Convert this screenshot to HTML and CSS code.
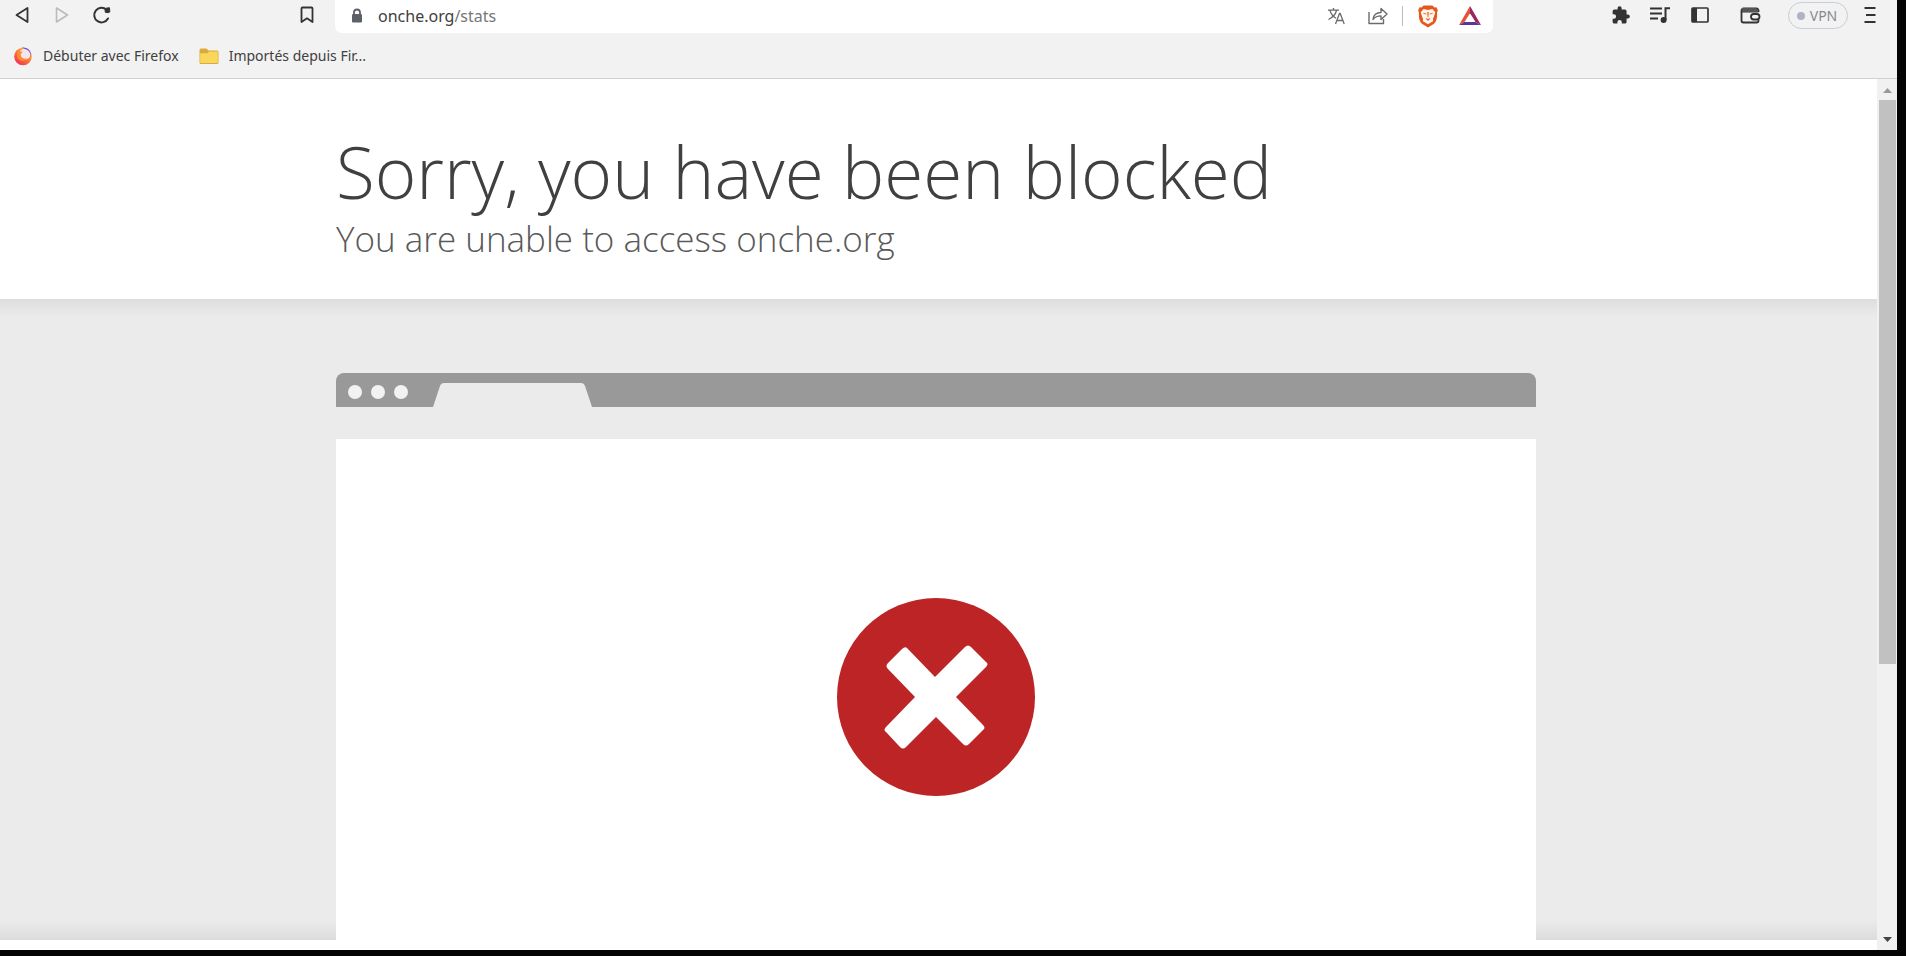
FILE: index.html
```html
<!DOCTYPE html>
<html lang="fr">
<head>
<meta charset="utf-8">
<meta name="viewport" content="width=device-width, initial-scale=1">
<title>onche.org/stats</title>
<link rel="stylesheet" href="styles.css">
</head>
<body>
<div class="browser">
  <header class="chrome">
    <div class="toolbar">
      <nav class="nav-buttons" aria-label="Navigation">
        <button class="icon-btn" aria-label="Back"><svg width="24" height="24" viewBox="0 0 24 24"><path d="M17.500 5v14L6.500 12z" fill="none" stroke="#333" stroke-width="1.800" stroke-linejoin="round"/></svg></button>
        <button class="icon-btn" aria-label="Forward" disabled><svg width="24" height="24" viewBox="0 0 24 24"><path d="M6.500 5v14L17.500 12z" fill="none" stroke="#bbb" stroke-width="1.600" stroke-linejoin="round"/></svg></button>
        <button class="icon-btn" aria-label="Reload"><svg width="24" height="24" viewBox="0 0 24 24"><path d="M18 15.500A7.300 7.300 0 1 1 16.500 6.700" fill="none" stroke="#333" stroke-width="2" stroke-linecap="round"/><path d="M15 6.500l1.800-1.500 2.700-.2.300 4.200-1.600.7-2.900-.4z" fill="#333" stroke="#333" stroke-linejoin="round"/></svg></button>
        <button class="icon-btn push" aria-label="Bookmark"><svg width="24" height="24" viewBox="0 0 24 24"><path d="M6.500 5.500a1 1 0 0 1 1-1h9a1 1 0 0 1 1 1V19L12 15.300 6.500 19z" fill="none" stroke="#333" stroke-width="1.800" stroke-linejoin="round"/></svg></button>
      </nav>
      <div class="address">
        <svg width="14" height="16" viewBox="0 0 14 16"><path d="M4 7V4.500a3 3 0 0 1 6 0V7" fill="none" stroke="#5d6066" stroke-width="1.800"/><rect x="2" y="6" width="10" height="8.500" rx="1.300" fill="#5d6066"/></svg>
        <div class="url">onche.org<span class="path">/stats</span></div>
        <div class="address-tools">
          <button class="icon-btn" aria-label="Translate"><svg width="24" height="24" viewBox="0 0 24 24"><g fill="none" stroke="#6b6b6b" stroke-width="1.300"><path d="M4 6.200h11M9.500 4v2M12.500 6.500c-1 4-4 7-8 9M6 6.500c1 3.500 3 6 6 7.800M11.500 20l4-10.500h.700L20.200 20M13 16.500h6"/></g></svg></button>
          <button class="icon-btn" aria-label="Share"><svg width="24" height="24" viewBox="0 0 24 24"><path d="M3 8v11.500h14.500V15M7 15.500c.5-4.500 3-7 8-7V4.500l6 5.500-6 5.500v-3.600c-3.600 0-5.800.8-8 3.600z" fill="none" stroke="#6b6b6b" stroke-width="1.400" stroke-linejoin="round"/></svg></button>
          <span class="divider"></span>
          <button class="icon-btn" aria-label="Brave Shields"><svg width="24" height="24" viewBox="0 0 24 24"><path d="M7.500 1.500h9l2 2 2-.2 1.300 3-.7 2.200c.3 7-1.200 10-3.800 11.800L12 23.400l-5.300-3.100C4.100 18.500 2.600 15.500 2.900 8.500l-.7-2.200 1.300-3 2 .2z" fill="#e2581d"/><path d="M7.600 4.900 12 5.900l4.400-1 2.900 3.400-1 3.200-1.300 3.400.1 2.300-2.600 1.600L12 20.200l-2.500-1.400-2.600-1.600.1-2.300-1.300-3.400-1-3.200z" fill="#fff3ea"/><path d="m6.800 9 3.400.4.300 1.100-2.500-.4zM17.200 9l-3.400.4-.3 1.100 2.500-.4zM11.300 8h1.400l-.3 5.300h-.8zM9.600 14l2.400.9 2.400-.9-1.200 2L12 16.700l-1.200-.7z" fill="#d9622e"/></svg></button>
          <button class="icon-btn" aria-label="Rewards"><svg width="24" height="24" viewBox="0 0 24 24"><path d="M12 2v7.300L6.500 18 1 21z" fill="#e5533a"/><path d="M12 2l11 19-5.500-3L12 9.300z" fill="#9c2463"/><path d="M1 21l5.500-3h11l5.500 3z" fill="#5a3797"/></svg></button>
        </div>
      </div>
      <div class="actions">
        <button class="icon-btn" aria-label="Extensions"><svg width="24" height="24" viewBox="0 0 24 24"><path d="M20.500 11H19V7a2 2 0 0 0-2-2h-4V3.500a2.500 2.500 0 0 0-5 0V5H4a2 2 0 0 0-2 2v3.800h1.500a2.700 2.700 0 0 1 0 5.400H2V20a2 2 0 0 0 2 2h3.800v-1.500a2.700 2.700 0 0 1 5.400 0V22H17a2 2 0 0 0 2-2v-4h1.500a2.500 2.500 0 0 0 0-5z" transform="translate(3 2.500) scale(.82)" fill="#333"/></svg></button>
        <button class="icon-btn" aria-label="Media"><svg width="24" height="24" viewBox="0 0 24 24"><path d="M2 5.500h12M2 10.500h12M2 15.500h8M17.500 17V5.300H22" fill="none" stroke="#333" stroke-width="2"/><circle cx="15.600" cy="17" r="3" fill="#333"/></svg></button>
        <button class="icon-btn" aria-label="Sidebar"><svg width="24" height="24" viewBox="0 0 24 24"><rect x="4" y="5" width="16" height="14" rx="1" fill="none" stroke="#333" stroke-width="1.700"/><path d="M4 5h5v14H4z" fill="#333"/></svg></button>
        <button class="icon-btn wallet" aria-label="Wallet"><svg width="24" height="24" viewBox="0 0 24 24"><path d="M20.500 9V7.500a2 2 0 0 0-2-2h-13a2 2 0 0 0-2 2v10a2 2 0 0 0 2 2h13a2 2 0 0 0 2-2V17M3.500 8.500h17" fill="none" stroke="#333" stroke-width="1.800"/><path d="M4 5h14l2 4H4z" fill="#555"/><rect x="13" y="11" width="8.500" height="5.500" rx="2.700" fill="#f2f2f2" stroke="#333" stroke-width="1.800"/></svg></button>
        <button class="vpn"><span class="dot"></span>VPN</button>
        <button class="icon-btn" aria-label="Menu"><svg width="24" height="24" viewBox="0 0 24 24"><path d="M6.500 5h11M8 12h9.500M6.500 19h11" stroke="#333" stroke-width="2"/></svg></button>
      </div>
    </div>
    <div class="bookmarks">
      <a class="bookmark" href="#">
        <svg width="20" height="20" viewBox="0 0 20 20"><defs><linearGradient id="fire" x1="1" y1="0" x2=".2" y2="1"><stop offset="0" stop-color="#ffd83d"/><stop offset=".5" stop-color="#ff7b32"/><stop offset="1" stop-color="#ee2c60"/></linearGradient></defs><circle cx="10" cy="10.500" r="8.800" fill="url(#fire)"/><circle cx="12" cy="8" r="5.600" fill="#f5e6ee"/><path d="M8.500 1.600c6-1 10.600 3.400 9.500 9.400-.4-4-2.200-7-6-7.900z" fill="#7448d4"/><path d="M4.500 4.200 7 5.800l3-.3-2.300 2.600c-.2 4.200 3.600 5.500 6.300 4.100-1.500 3.800-8.800 3.500-10-1.700z" fill="#ff8b2e"/></svg>
        <span>Débuter avec Firefox</span>
      </a>
      <a class="bookmark" href="#">
        <svg width="20" height="20" viewBox="0 0 20 20"><path d="M.5 4A1.500 1.500 0 0 1 2 2.500h5.500l2 2H18A1.500 1.500 0 0 1 19.500 6v10.500A1.500 1.500 0 0 1 18 18H2a1.500 1.500 0 0 1-1.500-1.500z" fill="#d9ab3c"/><path d="M1.200 7.200h7l2-1.700H18.800V16a1 1 0 0 1-1 1H2.200a1 1 0 0 1-1-1z" fill="#fbd65c"/></svg>
        <span>Importés depuis Fir...</span>
      </a>
    </div>
  </header>
  <div class="viewport">
    <main class="page">
      <div class="masthead">
        <div class="container">
          <h1>Sorry, you have been blocked</h1>
          <h2>You are unable to access onche.org</h2>
        </div>
      </div>
      <section class="stage">
        <div class="mock container">
          <div class="mock-bar">
            <span class="mock-dot"></span><span class="mock-dot"></span><span class="mock-dot"></span>
            <svg class="mock-tab" width="160" height="24" viewBox="0 0 160 24"><path d="M0 24 7 3Q8 0 11 0H148Q151 0 152 3L159 24z" fill="#ebebeb"/></svg>
          </div>
          <div class="mock-body">
            <svg width="200" height="200" viewBox="0 0 200 200" role="img" aria-label="Blocked"><circle cx="100" cy="100" r="99" fill="#bd2426"/><path d="M71 51 99 80 129 50Q132 47 135 50L150 65Q153 67 150 70L120 100 147 128Q150 131 147 133L133 147Q130 150 127 147L100 120 70 150Q67 153 64 150L50 135Q47 133 50 130L79 100 52 72Q49 69 52 66L66 52Q69 49 71 51z" fill="#fff"/></svg>
          </div>
        </div>
      </section>
    </main>
    <div class="scrollbar" aria-hidden="true">
      <svg width="20" height="21" viewBox="0 0 20 21"><path d="M6 14l4.500-5 4.500 5z" fill="#999"/></svg>
      <div class="track"><div class="thumb"></div></div>
      <svg width="20" height="21" viewBox="0 0 20 21"><path d="M6 8h9l-4.500 5z" fill="#444"/></svg>
    </div>
  </div>
</div>
</body>
</html>
```
FILE: styles.css
```css
* { box-sizing: border-box; }

body {
  margin: 0;
  background: #040404;
  font-family: "Noto Sans", "Open Sans", sans-serif;
  color: #404040;
}

.browser {
  display: flex;
  flex-direction: column;
  height: 100vh;
  padding: 0 9px 6px 0;
}

.chrome {
  flex: none;
  background: #f2f2f2;
  border-bottom: 1px solid #d0d1d3;
}

.toolbar {
  display: flex;
  height: 33px;
}

button {
  font: inherit;
  border: 0;
  background: none;
  padding: 0;
}

.icon-btn {
  display: flex;
  width: 24px;
  height: 24px;
}

.nav-buttons {
  display: flex;
  gap: 16px;
  width: 335px;
  padding: 3px 16px 0 10px;
}

.push { margin-left: auto; }

.address {
  flex: 1;
  display: flex;
  align-items: center;
  padding: 0 11px 2px 15px;
  background: #fff;
  border-radius: 0 0 7px 7px;
}

.url {
  flex: 1;
  margin-left: 14px;
  font-size: 16px;
  line-height: 24px;
}

.path { color: #777; }

.address-tools {
  display: flex;
  align-items: center;
  gap: 18px;
}

.divider {
  width: 1px;
  height: 20px;
  margin: 0 -5px 0 -6px;
  background: #bbb;
}

.actions {
  display: flex;
  gap: 16px;
  width: 404px;
  padding: 3px 15px 0 0;
  justify-content: flex-end;
}

.wallet { margin: 0 10px; }

.vpn {
  display: flex;
  align-items: center;
  justify-content: center;
  gap: 5px;
  width: 60px;
  height: 27px;
  margin-top: -1px;
  margin-right: -6px;
  padding-right: 2px;
  border: 1px solid #c9cbd6;
  border-radius: 14px;
  color: #858990;
  font-size: 14px;
}

.dot {
  width: 8px;
  height: 8px;
  border-radius: 50%;
  background: #aeb2c8;
}

.bookmarks {
  display: flex;
  gap: 20px;
  height: 45px;
  padding: 12px 13px 0;
}

.bookmark {
  display: flex;
  align-items: center;
  gap: 10px;
  height: 22px;
  color: #404040;
  font-size: 14px;
  line-height: 20px;
  text-decoration: none;
}

.viewport {
  flex: 1;
  display: flex;
  min-height: 0;
  background: #fff;
}

.page {
  flex: 1;
  display: flex;
  flex-direction: column;
  min-width: 0;
  padding-bottom: 10px;
}

.container {
  width: calc(100% - 48px);
  max-width: 1200px;
  margin: 0 auto;
}

.masthead {
  padding: 46px 5px 40px 0;
}

h1, h2 {
  margin: 0;
  font-family: "Open Sans", sans-serif;
  font-weight: 300;
}

h1 {
  font-size: 71px;
  line-height: 94px;
}

h2 {
  color: #595959;
  font-size: 35px;
  line-height: 40px;
}

.stage {
  flex: 1;
  display: flex;
  padding: 74px 5px 0 0;
  background: linear-gradient(#dedede, #ebebeb 18px, #ebebeb calc(100% - 20px), #dcdcdc);
}

.mock {
  display: flex;
  flex-direction: column;
}

.mock-bar {
  display: flex;
  align-items: center;
  gap: 9px;
  height: 34px;
  padding-left: 12px;
  padding-top: 3px;
  background: #999;
  border-radius: 8px 8px 0 0;
}

.mock-dot {
  width: 14px;
  height: 14px;
  border-radius: 50%;
  background: #f2f2f2;
}

.mock-tab {
  align-self: flex-end;
  margin-left: 16px;
}

.mock-body {
  flex: 1;
  display: flex;
  align-items: center;
  justify-content: center;
  margin-top: 32px;
  padding-top: 15px;
  background: #fff;
}

.scrollbar {
  display: flex;
  flex-direction: column;
  width: 20px;
  background: #f1f1f1;
}

.track {
  flex: 1;
  padding: 0 1px 0 2px;
}

.thumb {
  height: 68%;
  background: #c1c1c1;
}
```
